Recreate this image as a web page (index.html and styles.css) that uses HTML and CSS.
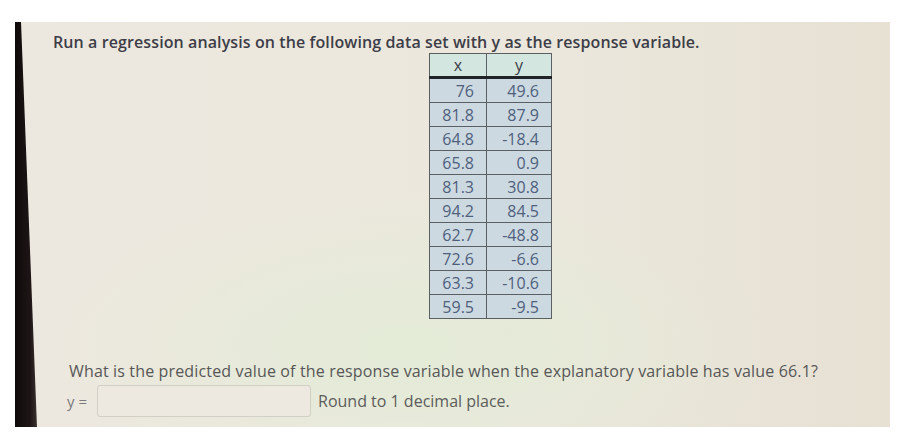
FILE: index.html
```html
<!DOCTYPE html>
<html lang="en">
<head>
<meta charset="utf-8">
<title>Regression question</title>
<link rel="stylesheet" href="styles.css">
</head>
<body>
<div class="photo">
  <div class="edge"></div>
  <div class="content">
    <p class="title">Run a regression analysis on the following data set with y as the response variable.</p>
    <table class="data">
      <thead>
        <tr><th class="cx">x</th><th class="cy">y</th></tr>
      </thead>
      <tbody>
        <tr><td>76</td><td>49.6</td></tr>
        <tr><td>81.8</td><td>87.9</td></tr>
        <tr><td>64.8</td><td>-18.4</td></tr>
        <tr><td>65.8</td><td>0.9</td></tr>
        <tr><td>81.3</td><td>30.8</td></tr>
        <tr><td>94.2</td><td>84.5</td></tr>
        <tr><td>62.7</td><td>-48.8</td></tr>
        <tr><td>72.6</td><td>-6.6</td></tr>
        <tr><td>63.3</td><td>-10.6</td></tr>
        <tr><td>59.5</td><td>-9.5</td></tr>
      </tbody>
    </table>
    <p class="question">What is the predicted value of the response variable when the explanatory variable has value 66.1?</p>
    <div class="answer">
      <span class="label">y =</span>
      <span class="box"></span>
      <span class="hint">Round to 1 decimal place.</span>
    </div>
  </div>
</div>
</body>
</html>
```
FILE: styles.css
```css
html, body {
  margin: 0;
  padding: 0;
  background: #ffffff;
}

.photo {
  margin: 22px 0 0 15px;
  width: 875px;
  height: 405px;
  display: flex;
  background:
    radial-gradient(ellipse 60% 55% at 45% 80%, rgba(226, 236, 214, 0.9), rgba(226, 236, 214, 0) 70%),
    linear-gradient(90deg, #ede8df 0%, #ebe7dc 60%, #e6e1d3 100%);
  font-family: "Open Sans", "Liberation Sans", sans-serif;
}

.edge {
  flex: 0 0 22px;
  background: linear-gradient(90deg, #0f0a0a 0%, #1e1616 70%, #3a3230 100%);
  clip-path: polygon(0 0, 6px 0, 100% 100%, 0 100%);
}

.content {
  flex: 1;
  padding: 10px 0 0 16px;
}

.title {
  margin: 0 0 1px;
  font-size: 16px;
  font-weight: 600;
  line-height: 20px;
  color: #3d3d48;
  letter-spacing: 0.1px;
}

.data {
  margin: 0 0 0 376px;
  border-collapse: collapse;
  font-size: 16px;
  color: #4f5f7c;
}

.data th {
  background: #d3e7e0;
  color: #3c3c48;
  font-weight: normal;
  height: 22px;
  padding: 0;
  border: 1px solid #5b5f62;
  border-bottom: 3px solid #202428;
  text-align: center;
  line-height: 20px;
}

.data .cx { width: 56px; }
.data .cy { width: 64px; }

.data td {
  background: #ccd9e1;
  height: 23px;
  padding: 0 12px 0 0;
  border: 1px solid #5b5f62;
  text-align: right;
  line-height: 20px;
}

.question {
  margin: 42px 0 0 16px;
  font-size: 16px;
  line-height: 20px;
  color: #575757;
  letter-spacing: 0.15px;
}

.answer {
  display: flex;
  align-items: center;
  margin: 0 0 0 14px;
  height: 40px;
}

.label {
  font-size: 15px;
  color: #7a7a7a;
  width: 30px;
}

.box {
  width: 214px;
  height: 32px;
  box-sizing: border-box;
  border: 1px solid #d2cfc6;
  border-radius: 3px;
  background: #ede9e0;
}

.hint {
  margin-left: 7px;
  font-size: 16px;
  color: #5c5c5c;
}
```
